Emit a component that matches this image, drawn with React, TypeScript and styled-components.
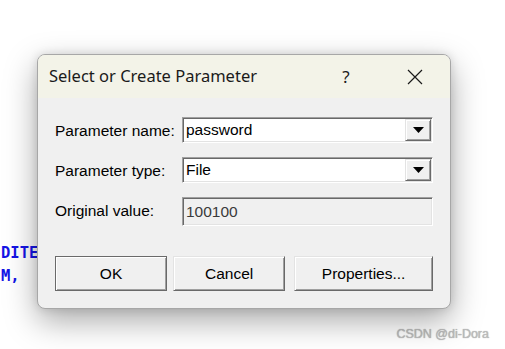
import React from "react";
import styled, { createGlobalStyle } from "styled-components";

const GlobalStyle = createGlobalStyle`
  html, body {
    margin: 0;
    padding: 0;
    background: #ffffff;
  }
`;

const Desktop = styled.div`
  position: relative;
  width: 505px;
  height: 349px;
  overflow: hidden;
  background: #ffffff;
`;

// code editor behind the dialog
const Editor = styled.div`
  padding: 242px 0 0 1px;
  font-family: "DejaVu Sans Mono", "Liberation Mono", monospace;
  font-weight: bold;
  font-size: 15.5px;
  line-height: 23px;
  color: #1414e6;
  white-space: pre;
`;

const Watermark = styled.div`
  position: absolute;
  right: 16px;
  bottom: 8px;
  font-family: "Liberation Sans", Arial, sans-serif;
  font-size: 12.5px;
  color: #bdbdbd;
  text-shadow: 0 0 1px #9a9a9a;
`;

const Dialog = styled.div`
  position: absolute;
  left: 37px;
  top: 54px;
  width: 412px;
  height: 253px;
  display: flex;
  flex-direction: column;
  background: #f0f0f0;
  border: 1px solid #a7a7a7;
  border-radius: 8px;
  overflow: hidden;
  box-shadow: 0 12px 32px rgba(0, 0, 0, 0.34), 0 0 10px rgba(0, 0, 0, 0.12);
`;

const TitleBar = styled.div`
  height: 43px;
  display: flex;
  align-items: center;
  background: #f3f3e8;
  padding-left: 11px;
`;

const Title = styled.div`
  flex: 1;
  font-family: "Noto Sans", "Open Sans", sans-serif;
  font-size: 16.5px;
  color: #1a1a1a;
  padding-bottom: 2px;
`;

const TitleButton = styled.div<{ $w: number }>`
  width: ${(p) => p.$w}px;
  height: 100%;
  display: flex;
  align-items: center;
  justify-content: center;
  font-family: "Noto Sans", "Open Sans", sans-serif;
  font-size: 17px;
  color: #1a1a1a;
`;

const Body = styled.div`
  flex: 1;
  padding: 19px 17px 0 17px;
`;

const Form = styled.div`
  display: grid;
  grid-template-columns: 127px 251px;
  grid-auto-rows: 26px;
  row-gap: 14px;
`;

const Label = styled.div`
  display: flex;
  align-items: center;
  padding-top: 1px;
  font-family: "Liberation Sans", Arial, sans-serif;
  font-size: 15.5px;
  color: #000;
`;

const Field = styled.div<{ $disabled?: boolean }>`
  display: flex;
  align-items: stretch;
  background: ${(p) => (p.$disabled ? "#f0f0f0" : "#ffffff")};
  border-top: 1px solid #a0a0a0;
  border-left: 1px solid #a0a0a0;
  border-right: 1px solid #ffffff;
  border-bottom: 1px solid #ffffff;
  box-shadow: inset 1px 1px 0 #696969, inset -1px -1px 0 #e3e3e3;
  height: ${(p) => (p.$disabled ? "29px" : "26px")};
  box-sizing: border-box;
`;

const FieldText = styled.div<{ $disabled?: boolean }>`
  flex: 1;
  display: flex;
  align-items: center;
  padding-left: 3px;
  font-family: "Liberation Sans", Arial, sans-serif;
  font-size: 15.5px;
  color: ${(p) => (p.$disabled ? "#3a3a3a" : "#000")};
`;

const DropButton = styled.div`
  width: 24px;
  margin: 1px 1px 1px 0;
  display: flex;
  align-items: center;
  justify-content: center;
  background: #f0f0f0;
  border-top: 1px solid #e3e3e3;
  border-left: 1px solid #e3e3e3;
  border-right: 1px solid #696969;
  border-bottom: 1px solid #696969;
  box-shadow: inset 1px 1px 0 #ffffff, inset -1px -1px 0 #a0a0a0;
`;

const Buttons = styled.div`
  display: flex;
  margin-top: 33px;
`;

const Button = styled.div<{ $w: number; $default?: boolean; $gap?: number }>`
  width: ${(p) => p.$w}px;
  height: 35px;
  margin-right: ${(p) => p.$gap ?? 0}px;
  box-sizing: border-box;
  display: flex;
  align-items: center;
  justify-content: center;
  background: #f0f0f0;
  font-family: "Liberation Sans", Arial, sans-serif;
  font-size: 15.5px;
  color: #000;
  border: 1px solid ${(p) => (p.$default ? "#6a6a6a" : "#a0a0a0")};
  border-top-color: ${(p) => (p.$default ? "#6a6a6a" : "#e3e3e3")};
  border-left-color: ${(p) => (p.$default ? "#6a6a6a" : "#e3e3e3")};
  border-right-color: #696969;
  border-bottom-color: #696969;
  box-shadow: inset 1px 1px 0 #ffffff, inset -1px -1px 0 #a0a0a0;
`;

const Caret = () => (
  <svg width="11" height="6" viewBox="0 0 11 6">
    <path d="M0 0 H11 L5.5 6 Z" fill="#000" />
  </svg>
);

const CloseIcon = () => (
  <svg width="16" height="16" viewBox="0 0 16 16">
    <path d="M1 1 L15 15 M15 1 L1 15" stroke="#1a1a1a" strokeWidth="1.2" />
  </svg>
);

export default function App() {
  return (
    <Desktop>
      <GlobalStyle />
      <Editor>{"DITEM_NAME\nM,"}</Editor>
      <Watermark>CSDN @di-Dora</Watermark>
      <Dialog>
        <TitleBar>
          <Title>Select or Create Parameter</Title>
          <TitleButton $w={68}>?</TitleButton>
          <TitleButton $w={70}>
            <CloseIcon />
          </TitleButton>
        </TitleBar>
        <Body>
          <Form>
            <Label>Parameter name:</Label>
            <Field>
              <FieldText>password</FieldText>
              <DropButton>
                <Caret />
              </DropButton>
            </Field>
            <Label>Parameter type:</Label>
            <Field>
              <FieldText>File</FieldText>
              <DropButton>
                <Caret />
              </DropButton>
            </Field>
            <Label>Original value:</Label>
            <Field $disabled>
              <FieldText $disabled>100100</FieldText>
            </Field>
          </Form>
          <Buttons>
            <Button $w={113} $gap={6} $default>
              OK
            </Button>
            <Button $w={113} $gap={9}>
              Cancel
            </Button>
            <Button $w={140}>Properties...</Button>
          </Buttons>
        </Body>
      </Dialog>
    </Desktop>
  );
}
